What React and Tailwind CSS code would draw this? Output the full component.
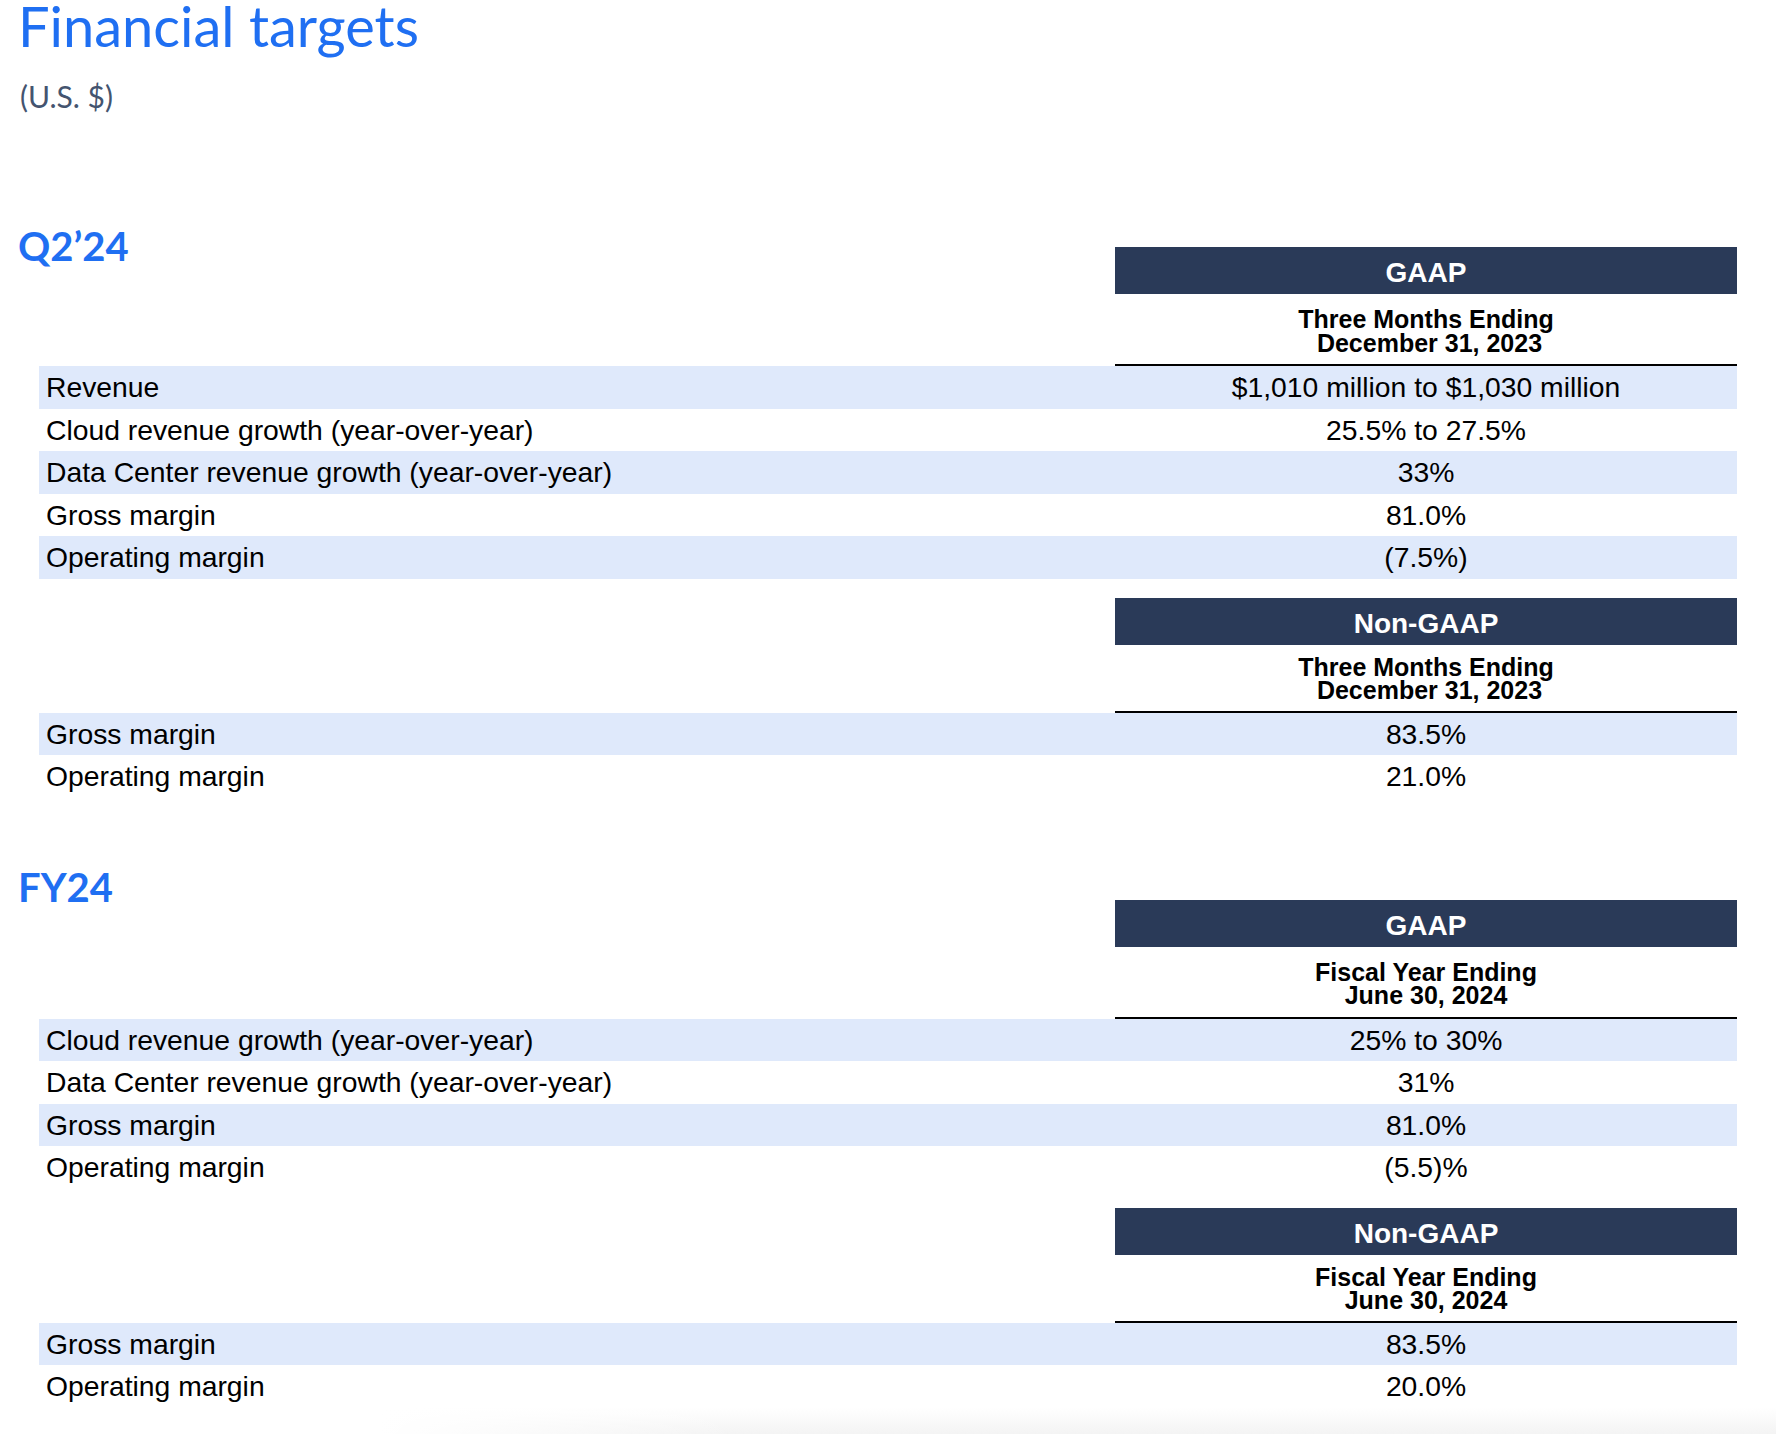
import React from 'react';

const sections = [
    {
        title: 'Q2’24',
        titleOffset: '-mt-[21px]',
        spacing: 'mt-[136px]',
        blocks: [
            {
                label: 'GAAP',
                period: ['Three Months Ending', '\u00a0December 31, 2023'],
                tall: true,
                rows: [
                    ['Revenue', '$1,010 million to $1,030 million'],
                    ['Cloud revenue growth (year-over-year)', '25.5% to 27.5%'],
                    ['Data Center revenue growth (year-over-year)', '33%'],
                    ['Gross margin', '81.0%'],
                    ['Operating margin', '(7.5%)'],
                ],
            },
            {
                label: 'Non-GAAP',
                period: ['Three Months Ending', '\u00a0December 31, 2023'],
                tall: false,
                rows: [
                    ['Gross margin', '83.5%'],
                    ['Operating margin', '21.0%'],
                ],
            },
        ],
    },
    {
        title: 'FY24',
        titleOffset: '-mt-[33px]',
        spacing: 'mt-[102px]',
        blocks: [
            {
                label: 'GAAP',
                period: ['Fiscal Year Ending', 'June 30, 2024'],
                tall: true,
                rows: [
                    ['Cloud revenue growth (year-over-year)', '25% to 30%'],
                    ['Data Center revenue growth (year-over-year)', '31%'],
                    ['Gross margin', '81.0%'],
                    ['Operating margin', '(5.5)%'],
                ],
            },
            {
                label: 'Non-GAAP',
                period: ['Fiscal Year Ending', 'June 30, 2024'],
                tall: false,
                rows: [
                    ['Gross margin', '83.5%'],
                    ['Operating margin', '20.0%'],
                ],
            },
        ],
    },
];

const TargetBlock = ({ block, heading, headingOffset, first }) => (
    <div className={first ? '' : 'mt-[19px]'}>
        {/* Navy header */}
        <div className="flex">
            <div className="flex-1">
                {heading && (
                    <h2 className={`${headingOffset} -ml-[21px] font-['Lato',sans-serif] font-bold text-[40px] leading-none text-[#1f6ff2]`}>
                        {heading}
                    </h2>
                )}
            </div>
            <div className="w-[622px] h-[47px] bg-[#2a3a58] pt-[12px] text-center text-white font-bold text-[28px] leading-none">
                {block.label}
            </div>
        </div>

        {/* Period */}
        <div className="flex">
            <div className="flex-1" />
            <div
                className={`w-[622px] border-b-2 border-black text-center font-bold text-[25px] leading-[23.5px] text-black ${
                    block.tall ? 'h-[72px] pt-[14px]' : 'h-[68px] pt-[11px]'
                }`}
            >
                <div>{block.period[0]}</div>
                <div>{block.period[1]}</div>
            </div>
        </div>

        {/* Rows */}
        {block.rows.map(([label, value], i) => (
            <div
                key={label}
                className={`flex h-[42.5px] text-[28.3px] leading-[42.5px] text-black ${i % 2 === 0 ? 'bg-[#dfe9fb]' : 'bg-white'}`}
            >
                <div className="flex-1 pl-[7px] whitespace-nowrap">{label}</div>
                <div className="w-[622px] text-center whitespace-nowrap">{value}</div>
            </div>
        ))}
    </div>
);

export default function App() {
    return (
        <div className="w-full min-h-screen bg-white font-['Liberation_Sans',Arial,sans-serif]">
            <div className="pl-[15px] pr-[39px]">
                <h1 className="-mt-[2px] ml-[3px] font-['Lato',sans-serif] text-[56px] leading-none text-[#1f6ff2]">Financial targets</h1>
                <div className="mt-[27px] ml-[5px] font-['Lato',sans-serif] text-[30px] leading-none text-[#44546f]">(U.S. $)</div>

                {sections.map((section) => (
                    <div key={section.title} className={`${section.spacing} ml-[24px]`}>
                        {section.blocks.map((block, i) => (
                            <TargetBlock
                                key={block.label}
                                block={block}
                                first={i === 0}
                                heading={i === 0 ? section.title : null}
                                headingOffset={section.titleOffset}
                            />
                        ))}
                    </div>
                ))}
            </div>

            {/* faint shadow at the foot of the page */}
            <div className="ml-[380px] h-[27px] bg-gradient-to-b from-white to-[#f3f3f3]">
                <div className="w-[360px] h-full bg-gradient-to-r from-white to-transparent" />
            </div>
        </div>
    );
}
